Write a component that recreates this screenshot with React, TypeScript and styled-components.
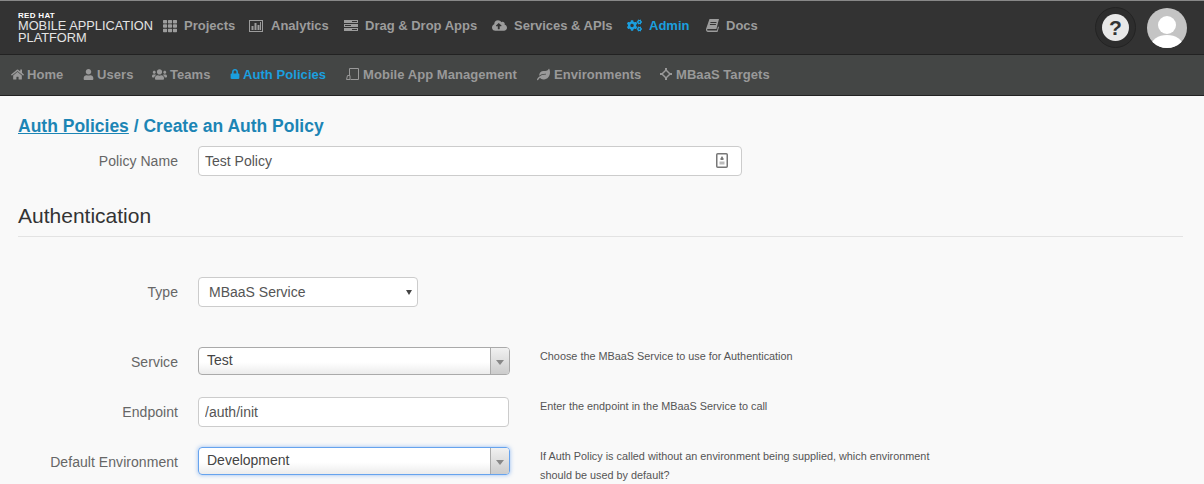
import * as React from "react";
import styled, { createGlobalStyle } from "styled-components";
import {
  FaCloudUploadAlt,
  FaCogs,
  FaHome,
  FaLeaf,
  FaLock,
  FaTh,
  FaUser,
  FaUsers,
} from "react-icons/fa";

const GlobalStyle = createGlobalStyle`
  html, body {
    margin: 0;
    padding: 0;
    height: 484px;
    overflow: hidden;
    background: #f9f9f9;
    font-family: "Liberation Sans", Arial, sans-serif;
  }
`;

const TopBar = styled.header`
  display: flex;
  align-items: center;
  height: 53px;
  padding: 0 17px 0 18px;
  background: #333;
  border-top: 1px solid #888;
  border-bottom: 1px solid #222;
`;

const Logo = styled.div`
  width: 145px;
  color: #e4e4e4;
  font-size: 12.8px;
  line-height: 12px;
  white-space: nowrap;
  flex-shrink: 0;
`;

const LogoBrand = styled.div`
  font-size: 8px;
  font-weight: bold;
  line-height: 8px;
  letter-spacing: 0.3px;
  color: #fff;
`;

const TopNav = styled.nav`
  display: flex;
  align-items: center;
  flex: 1;
  padding-bottom: 4px;
`;

const TopItem = styled.a<{ $active?: boolean; $width: number }>`
  display: flex;
  align-items: center;
  width: ${(p) => p.$width}px;
  flex-shrink: 0;
  font-size: 13px;
  font-weight: bold;
  white-space: nowrap;
  color: ${(p) => (p.$active ? "#1b9fdf" : "#9c9c9c")};
`;

const TopIcon = styled.span<{ $width: number }>`
  display: inline-flex;
  align-items: center;
  width: ${(p) => p.$width}px;
  font-size: 13px;
`;

const Actions = styled.div`
  display: flex;
  align-items: center;
  gap: 11px;
`;

const HelpRing = styled.div`
  display: flex;
  align-items: center;
  justify-content: center;
  width: 41px;
  height: 41px;
  box-sizing: border-box;
  border-radius: 50%;
  border: 1px solid #232323;
  background: #2d2d2d;
`;

const HelpDisc = styled.div`
  display: flex;
  align-items: center;
  justify-content: center;
  width: 27px;
  height: 27px;
  border-radius: 50%;
  background: #e8e8e8;
  color: #333;
  font-size: 21px;
  font-weight: bold;
  line-height: 1;
`;

const Avatar = styled.svg`
  display: block;
  width: 40px;
  height: 40px;
  border-radius: 50%;
`;

const SubBar = styled.nav`
  display: flex;
  align-items: center;
  box-sizing: border-box;
  height: 41px;
  padding: 0 0 2px 11px;
  background: #444645;
  border-bottom: 1px solid #222;
`;

const SubItem = styled.a<{ $active?: boolean; $width: number }>`
  display: flex;
  align-items: center;
  width: ${(p) => p.$width}px;
  flex-shrink: 0;
  font-size: 13px;
  font-weight: bold;
  letter-spacing: 0.06px;
  white-space: nowrap;
  color: ${(p) => (p.$active ? "#1b9fdf" : "#999")};
`;

const Main = styled.main`
  padding: 0 21px 0 18px;
`;

const Title = styled.h1`
  margin: 20px 0 0;
  font-size: 17.5px;
  line-height: 20px;
  font-weight: bold;
  color: #1c85b5;
`;

const TitleLink = styled.a`
  text-decoration: underline;
`;

const Row = styled.div<{ $top: number }>`
  display: flex;
  align-items: flex-start;
  margin-top: ${(p) => p.$top}px;
`;

const Label = styled.label`
  width: 160px;
  flex-shrink: 0;
  margin-right: 20px;
  text-align: right;
  font-size: 14px;
  letter-spacing: 0.05px;
  line-height: 30px;
  color: #666;
`;

const FieldColumn = styled.div`
  width: 312px;
  flex-shrink: 0;
`;

const TextBox = styled.div<{ $width: number }>`
  position: relative;
  width: ${(p) => p.$width}px;
`;

const Input = styled.input`
  display: block;
  box-sizing: border-box;
  width: 100%;
  height: 30px;
  padding: 0 6px;
  border: 1px solid #ccc;
  border-radius: 4px;
  background: #fff;
  font: 14px "Liberation Sans", Arial, sans-serif;
  color: #555;
  outline: none;
`;

const FieldIcon = styled.svg`
  position: absolute;
  top: 7px;
  right: 14px;
  width: 12px;
  height: 15px;
`;

const Heading = styled.h2`
  margin: 27px 0 0;
  padding-bottom: 7px;
  font-size: 21px;
  line-height: 26px;
  font-weight: normal;
  color: #333;
  border-bottom: 1px solid #e3e3e3;
`;

const NativeSelect = styled.div`
  position: relative;
  box-sizing: border-box;
  width: 220px;
  height: 30px;
  padding-left: 10px;
  border: 1px solid #ccc;
  border-radius: 4px;
  background: #fff;
  font-size: 14px;
  line-height: 28px;
  color: #555;

  &::after {
    content: "";
    position: absolute;
    top: 12px;
    right: 5px;
    border-style: solid;
    border-width: 5px 3px 0;
    border-color: #444 transparent transparent;
  }
`;

const Combo = styled.div<{ $focused?: boolean }>`
  position: relative;
  box-sizing: border-box;
  width: 312px;
  height: 28px;
  padding-left: 8px;
  border: 1px solid ${(p) => (p.$focused ? "#66a3ee" : "#aaa")};
  border-radius: 4px;
  background: linear-gradient(#fff 55%, #ececec);
  box-shadow: ${(p) => (p.$focused ? "0 0 4px rgba(82, 146, 236, 0.6)" : "none")};
  font-size: 14px;
  line-height: 24px;
  color: #444;
`;

const ComboButton = styled.span`
  position: absolute;
  top: 0;
  right: 0;
  bottom: 0;
  width: 18px;
  border-left: 1px solid #aaa;
  border-radius: 0 3px 3px 0;
  background: linear-gradient(#f1f1f1, #ccc);

  &::after {
    content: "";
    position: absolute;
    top: 12px;
    left: 5px;
    border-style: solid;
    border-width: 5px 4px 0;
    border-color: #888 transparent transparent;
  }
`;

const Help = styled.p`
  width: 400px;
  margin: 0 0 0 30px;
  font-size: 10.85px;
  line-height: 19px;
  color: #555;
`;

function AnalyticsIcon() {
  return (
    <svg width="14" height="12" viewBox="0 0 14 12" fill="currentColor">
      <path d="M0 0h14v12H0zM1 1v10h12V1z" fillRule="evenodd" />
      <path d="M2.500 6h2v4h-2zM5.500 3h2v7h-2zM8.500 5h2v5h-2zM11 2h1v8h-1z" />
    </svg>
  );
}

function StackIcon() {
  return (
    <svg width="14" height="11" viewBox="0 0 14 11" fill="currentColor">
      <path d="M0 0h14v3H0zM0 4h14v3H0zM0 8h14v3H0z" />
      <path d="M8 1h5v1H8zM1 5h6v1H1zM8 9h5v1H8z" fill="#333" />
    </svg>
  );
}

function SlantedBookIcon() {
  return (
    <svg width="13" height="13" viewBox="0 0 13 13" fill="currentColor">
      <path d="M3.500 0H13l-2.600 10H2.200C1.300 10 1 10.500 1.200 11c.2.400.6.600 1.200.600H11l1-4 1 .4-1.500 5H2C.8 13 0 12 0 10.800c0-.4 0-.7.100-1z" />
      <path d="M4.500 3h6l-.2 1h-6zM4 5h6l-.2 1h-6z" fill="#333" />
    </svg>
  );
}

function DevicesIcon() {
  return (
    <svg width="13" height="12" viewBox="0 0 13 12" fill="none" stroke="currentColor">
      <path d="M3.500 7V.5h9v11h-8" />
      <path d="M.500 11.500l1-4h2.500v4z" />
    </svg>
  );
}

function TargetIcon() {
  return (
    <svg width="12" height="12" viewBox="0 0 12 12" fill="none" stroke="currentColor" strokeWidth="1.500">
      <path d="M6 0v3M6 9v3M0 6h3M9 6h3" strokeWidth="2" />
      <path d="M6 2l4 4-4 4-4-4z" />
    </svg>
  );
}

const topItems = [
  { label: "Projects", width: 86, iconWidth: 21, icon: <FaTh size={14} /> },
  { label: "Analytics", width: 95, iconWidth: 22, icon: <AnalyticsIcon /> },
  { label: "Drag & Drop Apps", width: 148, iconWidth: 21, icon: <StackIcon /> },
  { label: "Services & APIs", width: 135, iconWidth: 22, icon: <FaCloudUploadAlt size={15} /> },
  { label: "Admin", width: 79, iconWidth: 22, icon: <FaCogs size={15} />, active: true },
  { label: "Docs", width: 60, iconWidth: 20, icon: <SlantedBookIcon /> },
];

const subItems = [
  { label: "Home", width: 72, iconWidth: 16, icon: <FaHome size={13} /> },
  { label: "Users", width: 69, iconWidth: 14, icon: <FaUser size={11} /> },
  { label: "Teams", width: 78, iconWidth: 18, icon: <FaUsers size={15} /> },
  { label: "Auth Policies", width: 116, iconWidth: 13, icon: <FaLock size={10} />, active: true },
  { label: "Mobile App Management", width: 191, iconWidth: 17, icon: <DevicesIcon /> },
  { label: "Environments", width: 123, iconWidth: 17, icon: <FaLeaf size={13} /> },
  { label: "MBaaS Targets", width: 120, iconWidth: 16, icon: <TargetIcon /> },
];

const App: React.FunctionComponent = () => {
  return (
    <>
      <GlobalStyle />
      <TopBar>
        <Logo>
          <LogoBrand>RED HAT</LogoBrand>
          MOBILE APPLICATION
          <br />
          PLATFORM
        </Logo>
        <TopNav>
          {topItems.map((item) => (
            <TopItem key={item.label} $active={item.active} $width={item.width}>
              <TopIcon $width={item.iconWidth}>{item.icon}</TopIcon>
              {item.label}
            </TopItem>
          ))}
        </TopNav>
        <Actions>
          <HelpRing>
            <HelpDisc>?</HelpDisc>
          </HelpRing>
          <Avatar viewBox="0 0 40 40">
            <rect width="40" height="40" fill="#c4c4c4" />
            <circle cx="20" cy="17" r="9" fill="#fff" />
            <ellipse cx="20" cy="38" rx="16" ry="11" fill="#fff" />
          </Avatar>
        </Actions>
      </TopBar>
      <SubBar>
        {subItems.map((item) => (
          <SubItem key={item.label} $active={item.active} $width={item.width}>
            <TopIcon $width={item.iconWidth}>{item.icon}</TopIcon>
            {item.label}
          </SubItem>
        ))}
      </SubBar>
      <Main>
        <Title>
          <TitleLink>Auth Policies</TitleLink> / Create an Auth Policy
        </Title>
        <Row $top={10}>
          <Label>Policy Name</Label>
          <TextBox $width={544}>
            <Input readOnly value="Test Policy" />
            <FieldIcon viewBox="0 0 12 15">
              <rect x="0.750" y="0.750" width="10.500" height="13.500" rx="1" fill="none" stroke="#777" strokeWidth="1.500" />
              <path d="M6 3l1.500 2.500v1.500h-3v-1.500z" fill="#777" />
              <path d="M3.500 8.500h5v3h-5z" fill="#bbb" />
            </FieldIcon>
          </TextBox>
        </Row>
        <Heading>Authentication</Heading>
        <Row $top={40}>
          <Label>Type</Label>
          <NativeSelect>MBaaS Service</NativeSelect>
        </Row>
        <Row $top={40}>
          <Label>Service</Label>
          <FieldColumn>
            <Combo>
              Test
              <ComboButton />
            </Combo>
          </FieldColumn>
          <Help>Choose the MBaaS Service to use for Authentication</Help>
        </Row>
        <Row $top={20}>
          <Label>Endpoint</Label>
          <FieldColumn>
            <TextBox $width={311}>
              <Input readOnly value="/auth/init" />
            </TextBox>
          </FieldColumn>
          <Help>Enter the endpoint in the MBaaS Service to call</Help>
        </Row>
        <Row $top={20}>
          <Label>Default Environment</Label>
          <FieldColumn>
            <Combo $focused>
              Development
              <ComboButton />
            </Combo>
          </FieldColumn>
          <Help>
            If Auth Policy is called without an environment being supplied, which environment
            should be used by default?
          </Help>
        </Row>
      </Main>
    </>
  );
};

export default App;
